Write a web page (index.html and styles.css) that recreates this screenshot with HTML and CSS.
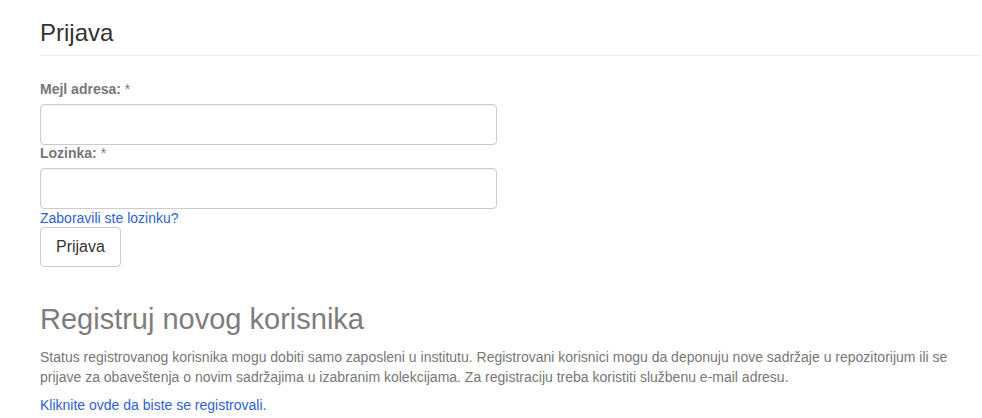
FILE: index.html
```html
<!DOCTYPE html>
<html lang="sr">
<head>
<meta charset="utf-8">
<title>Prijava</title>
<link rel="stylesheet" href="styles.css">
</head>
<body>
<div class="container">
  <h2 class="page-header">Prijava</h2>
  <form class="login-form">
    <label class="field-label" for="email"><b>Mejl adresa:</b> *</label>
    <input class="text-input" id="email" type="text">
    <label class="field-label" for="password"><b>Lozinka:</b> *</label>
    <input class="text-input" id="password" type="password">
    <a class="forgot-link" href="#">Zaboravili ste lozinku?</a>
    <button class="btn" type="button">Prijava</button>
  </form>
  <h2 class="register-title">Registruj novog korisnika</h2>
  <p class="register-text">Status registrovanog korisnika mogu dobiti samo zaposleni u institutu. Registrovani korisnici mogu da deponuju nove sadržaje u repozitorijum ili se prijave za obaveštenja o novim sadržajima u izabranim kolekcijama. Za registraciju treba koristiti službenu e-mail adresu.</p>
  <a class="register-link" href="#">Kliknite ovde da biste se registrovali.</a>
</div>
</body>
</html>
```

FILE: styles.css
```css
html, body {
  margin: 0;
  padding: 0;
  background: #ffffff;
}

body {
  font-family: "Liberation Sans", Arial, sans-serif;
  font-size: 14px;
  line-height: 20px;
  color: #333333;
}

.container {
  padding: 0 1px 0 40px;
}

.page-header {
  margin: 20px 0 0;
  padding-bottom: 9px;
  border-bottom: 1px solid #eeeeee;
  font-size: 24px;
  font-weight: normal;
  line-height: 1.1;
  color: #333333;
}

.login-form {
  display: flex;
  flex-direction: column;
  align-items: flex-start;
  padding-top: 25px;
}

.field-label {
  display: block;
  line-height: 16px;
  margin-bottom: 7px;
  color: #777777;
  font-weight: normal;
}

.field-label b {
  font-weight: bold;
}

.text-input {
  box-sizing: border-box;
  width: 457px;
  height: 41px;
  margin: 0;
  padding: 6px 12px;
  border: 1px solid #cccccc;
  border-radius: 4px;
  background: #ffffff;
  font: inherit;
  box-shadow: inset 0 1px 1px rgba(0, 0, 0, 0.06);
}

.forgot-link {
  display: block;
  line-height: 18px;
  color: #2f5fd4;
  text-decoration: none;
}

.btn {
  box-sizing: border-box;
  height: 40px;
  padding: 0 15px;
  border: 1px solid #cccccc;
  border-radius: 4px;
  background: #ffffff;
  color: #333333;
  font-family: "Liberation Sans", Arial, sans-serif;
  font-size: 16px;
  display: flex;
  align-items: center;
}

.register-title {
  margin: 37px 0 11px;
  font-size: 29px;
  font-weight: normal;
  line-height: 1.1;
  color: #7d7d7d;
}

.register-text {
  margin: 0 0 8px;
  color: #777777;
  line-height: 20px;
}

.register-link {
  color: #2f5fd4;
  text-decoration: none;
}
```
